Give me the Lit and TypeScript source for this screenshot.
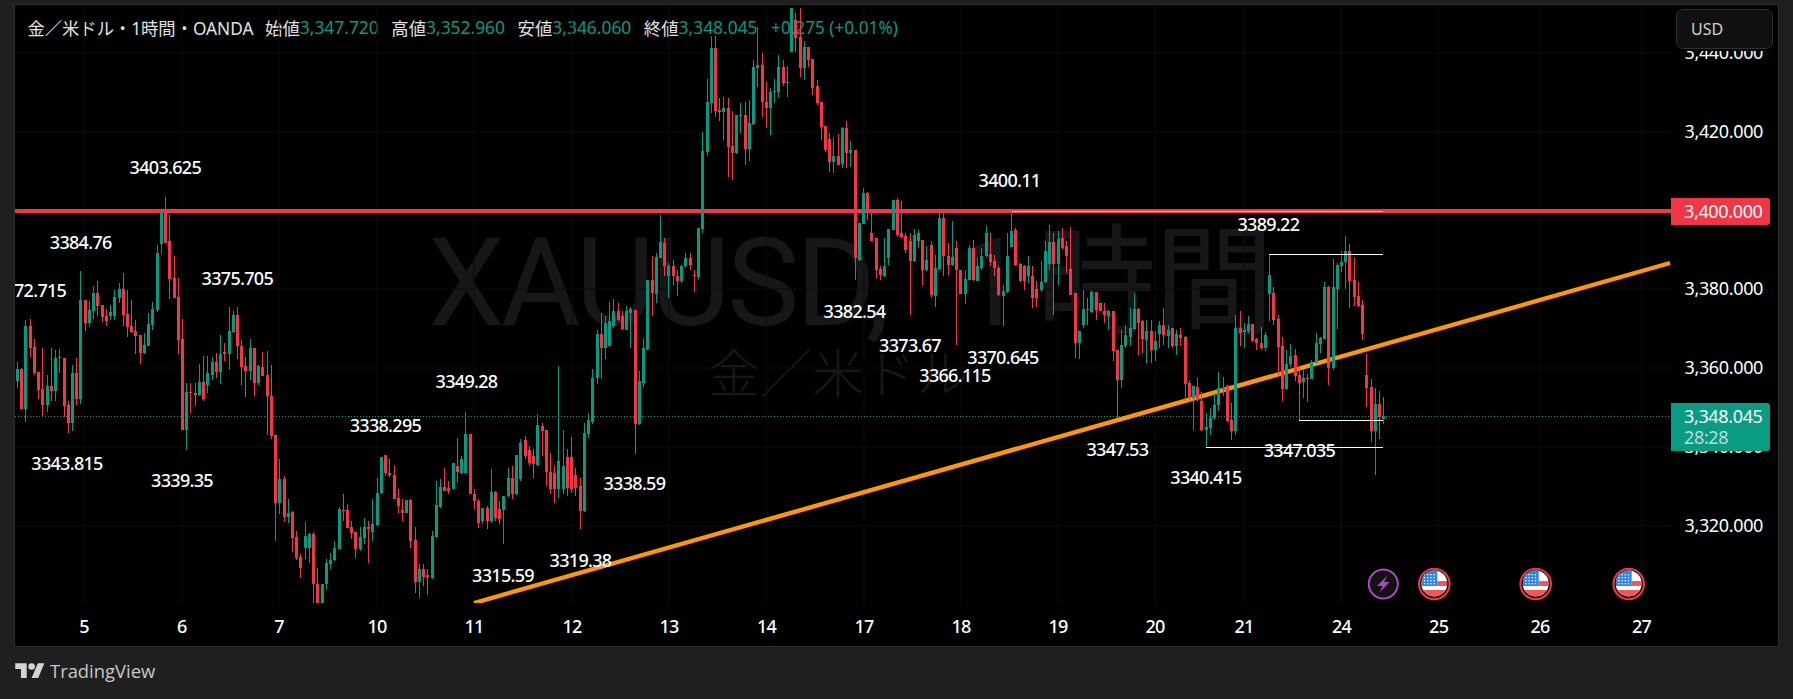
import { LitElement, html, svg, css } from "lit";
import { customElement } from "lit/decorators.js";

const OX = 15, OY = 5;
const PLOT_R = 1671, PLOT_B = 603;
const STEP = 4.23, LAST_X = 1383.33;

type Group = { cx: number; cy: number; sx: number; sy: number; rows: string };
const groups: Group[] = [
  { cx: 0, cy: 233, sx: 2.613, sy: 3, rows: `
46 G 408 445 388 465
56 R 407 527 405 527
67 G 279 527 262 567
79 R 279 345 258 372
90 R 342 420 318 425
101 R 418 470 418 497
111 R 468 515 345 548
122 G 460 515 427 537
134 R 460 474 345 505
145 G 375 474 352 505
156 G 372 376 348 420
166 R 375 518 375 552
179 R 516 570 505 600
189 G 420 570 397 595
200 R 420 498 375 515
210 G 200 497 114 512
222 R 200 270 200 293
233 G 232 270 205 282
244 G 180 233 160 257
254 R 180 218 145 250
265 R 216 252 216 268
277 R 250 264 228 280
288 G 237 250 215 262
299 G 192 248 170 260
310 G 168 195 150 210
322 R 168 245 120 280
333 R 243 282 170 312
344 R 280 297 200 300
354 R 295 308 262 362
366 R 306 360 306 392
377 G 337 360 300 362
388 G 273 338 240 340
398 G 228 277 207 292
409 G 60 232 35 238
420 G -67 33 -67 62
432 R -59 30 -109 30
443 R 25 138 -55 197
454 R 135 195 70 195
466 R 192 320 135 362
477 R 318 590 257 590
488 G 477 590 450 650
498 R 478 481 450 540
511 R 481 485 450 520
521 G 447 487 392 490
532 R 447 497 368 503
542 G 420 455 368 480
553 G 387 425 372 440
565 R 387 417 360 435
576 G 363 417 305 452
587 R 358 362 330 385
597 G 294 362 222 410
609 G 246 298 233 300
620 R 246 338 222 378
631 R 338 402 320 455
642 R 400 415 372 493
654 G 345 413 318 440
665 R 345 450 345 490
676 G 400 450 395 455
686 R 402 430 358 430
697 R 427 490 355 605
709 R 490 610 396 617` },
  { cx: 0, cy: 466, sx: 2.613, sy: 3, rows: `
720 R -93 110 -93 224
730 G 40 110 -20 145
741 R 40 152 30 168
753 G 140 152 100 170
764 R 137 215 135 258
775 R 213 275 195 283
786 R 272 305 265 335
797 G 210 245 168 278
808 G 205 245 200 290
819 R 203 355 198 412
829 R 355 412 305 412
840 G 355 412 355 412
852 G 292 355 280 368
863 G 282 295 262 308
874 G 247 282 225 285
885 G 128 248 122 250
897 R 132 134 85 165
908 R 133 185 115 187
919 R 183 200 165 220
930 R 198 248 198 275
941 G 213 250 183 255
952 G 183 215 155 235
963 R 183 190 165 290
974 G 175 197 100 225
985 G 82 178 35 180
997 G -27 82 -27 85
1007 R -32 22 -32 30
1018 R 20 28 -20 32
1029 R 28 98 0 100
1041 R 97 120 70 140
1052 R 132 140 100 165
1062 G 102 140 102 140
1073 R 102 225 100 245
1085 R 222 348 183 382
1096 G 310 348 295 395
1107 R 310 332 295 360
1118 R 328 332 310 387
1128 G 210 335 195 338
1140 G 118 212 45 215
1151 G 62 122 40 125
1163 R 63 75 5 75
1174 R 65 75 45 85
1186 G -9 68 -9 68
1195 R 0 18 -84 50
1205 G -21 20 -30 25
1216 G -96 20 -162 22
1228 R -97 83 -97 85
1240 R 83 105 70 130
1251 R 105 172 100 185
1262 G 125 165 125 175
1272 R 125 165 120 190
1284 G 78 165 10 172
1295 R 78 155 75 165
1306 R 130 158 105 175
1316 G 90 132 90 235
1328 G 35 90 5 92
1338 R 35 85 0 100
1350 G -34 85 -34 88
1361 G -69 40 -80 45
1372 R -77 -30 -90 -20
1383 R -49 -10 -60 0
1395 R -30 -5 -50 35
1405 G -123 -4 -156 0
1416 R -119 -104 -130 -30
1427 R -107 18 -107 60
1438 R 18 68 -40 85
1449 R 20 68 0 110
1460 G -14 70 -299 95
1470 G 0 68 -109 85
1481 R -27 65 -50 90
1491 R -27 70 -87 80
1502 R 28 65 5 90
1516 R 60 135 35 190
1527 G -99 135 -130 138
1538 G -139 -97 -160 -85
1548 G -264 -133 -290 -125
1558 G -396 -264 -409 -245` },
  { cx: 600, cy: 233, sx: 2.613, sy: 3, rows: `
3 R 303 345 240 437
13 G 270 345 250 378
24 G 265 338 207 340
35 G 233 280 198 285
46 R 235 260 210 265
58 R 248 288 235 290
68 G 235 290 220 292
80 G 228 240 222 345
91 R 230 572 230 662
102 G 443 572 415 575
113 G 345 450 315 462
124 G 140 347 140 350
135 R 140 180 70 250
146 G 72 182 60 210
157 G 28 75 -54 75
168 R 30 100 15 130
179 G 100 130 90 195
190 R 100 128 80 155
201 R 128 145 110 190
212 G 100 145 95 150
222 G 75 100 60 105
235 R 75 95 60 110
246 R 125 130 110 178
257 G -16 132 -16 140
710 R 0 25 -59 25
723 R 15 110 15 135
733 R 108 125 100 140
745 G 100 130 15 132
755 G -12 75 -12 95
787 R 0 12 -95 15
798 R 10 52 0 60
811 R 25 85 0 245
821 G 5 85 -13 88
832 G 0 25 -10 45
843 R 20 110 20 155
853 G 80 110 40 115
865 R 35 185 25 195
876 G 105 188 65 222
886 G -46 108 -65 110
897 R -45 70 -60 130
911 R 70 95 30 125
921 G 72 95 -35 100
932 R 45 112 25 335
942 R 112 183 112 183
954 G 138 183 110 212
965 G 45 140 35 142
975 R 45 140 20 145
986 G 100 143 75 145
997 G 70 105 45 110
1008 G 0 70 -21 72
1020 R 62 88 0 100
1031 R 83 105 65 130
1042 R 105 185 100 190
1054 G 175 188 155 280
1065 G 70 178 0 180
1075 G -6 42 -66 42
1086 R -9 95 -14 100
1098 R 93 145 90 148
1109 R 100 145 95 172
1120 G 100 128 70 150
1131 R 130 195 100 225
1142 R 168 195 145 222
1154 G 148 172 85 178
1164 G 55 148 25 150
1175 G 27 92 -25 110
1186 R 27 92 0 245
1198 G 18 92 -5 155
1208 R 15 45 -15 52
1219 R 40 70 25 120
1230 R 108 185 -17 187
1243 R 180 330 180 375
1253 G 295 330 295 378
1263 G 228 277 172 285
1274 R 228 232 195 275
1285 G 178 237 175 240
1297 R 178 232 178 262
1307 R 210 235 210 235
1318 R 235 247 210 270
1329 G 233 250 230 290
1342 R 233 355 233 385
1352 R 352 440 352 555
1362 G 335 440 290 465
1373 G 305 338 275 345
1385 G 285 312 225 340
1396 G 228 287 180 290
1407 R 228 270 225 365
1418 R 265 318 260 360
1430 G 295 320 262 390
1440 R 295 352 260 390
1450 G 325 352 295 385
1461 G 277 302 265 345
1472 R 275 305 225 335
1482 G 290 308 275 345
1492 R 285 340 285 345
1505 G 303 340 290 365
1516 R 305 315 285 340
1529 R 312 452 310 505
1540 R 450 495 440 505
1550 G 458 495 458 590
1562 R 435 480 435 500` },
  { cx: 600, cy: 0, sx: 2.613, sy: 3, rows: `
268 G 453 687 397 699
278 G 305 457 237 468
290 G 143 310 108 338
301 R 143 333 108 352
312 R 330 335 295 362
323 G 323 335 292 420
335 R 323 440 295 532
346 R 437 460 332 540
357 G 345 460 345 462
367 G 344 347 310 398
380 R 345 447 305 495
390 G 370 447 300 483
401 G 200 372 180 375
411 G 195 203 80 260
422 R 195 305 160 350
435 R 305 323 245 385
445 G 277 323 265 405
456 G 272 275 237 310
466 G 200 275 165 295
479 R 200 250 180 258
490 G 246 250 197 290
501 G 25 155 25 155
511 R 60 113 40 155
523 R 110 203 25 230
534 G 140 203 122 240
545 R 140 180 140 200
555 R 178 263 178 285
566 R 258 310 240 315
578 R 305 380 305 420
589 R 378 450 378 457
600 R 417 485 398 517
611 G 468 485 415 518
622 R 468 495 402 495
634 G 383 492 380 505
644 R 385 458 363 503
655 G 450 458 422 500
667 R 450 774 450 839
678 G 670 779 670 784
689 G 580 672 565 672
700 R 580 640 575 660
767 G 600 690 600 690
778 R 600 705 595 710` },
  { cx: 1193, cy: 233, sx: 2.613, sy: 3, rows: `
12 R 462 500 435 503
23 R 505 590 478 595
35 G 582 590 540 640
46 G 555 585 525 605
55 G 515 555 480 562
67 G 465 515 418 535
79 G 465 470 432 490
90 R 460 565 455 568
101 R 560 595 510 622
111 G 285 595 245 607
123 R 285 300 235 340
134 G 290 297 270 345
145 G 273 293 250 300
156 R 272 325 272 328
167 R 318 330 315 350` },
  { cx: 1260, cy: 230, sx: 3, sy: 3, rows: `
3 R 340 353 292 360
16 G 315 353 305 362
28 G 135 192 73 272
40 R 190 270 170 285
55 R 267 350 255 435
67 R 348 477 322 513
79 G 402 478 360 480
91 G 378 403 342 410
106 R 375 438 357 453
118 R 435 460 408 570
130 G 445 457 418 503
142 R 444 447 432 515
157 G 397 447 390 447
169 G 340 400 310 400
181 G 323 342 320 368
193 G 170 327 155 327
205 R 170 414 168 465
220 G 170 414 87 420
232 G 105 177 98 298
244 G 96 108 63 125
256 G 63 95 18 177
271 R 63 152 42 233
283 R 150 200 83 228
295 R 198 227 155 230
307 R 225 312 210 330
322 R 435 473 372 530
334 R 471 602 447 635
346 G 522 602 473 735
358 R 522 562 483 627
370 G 558 567 501 582` },
];

type Candle = { x: number; up: boolean; t: number; b: number; wt: number; wb: number };
function buildCandles(): Candle[] {
  const map = new Map<number, Candle>();
  for (const g of groups) {
    for (const line of g.rows.trim().split("\n")) {
      const [zx, c, t, b, wt, wb] = line.trim().split(" ");
      const rx = g.cx + Number(zx) / g.sx;
      const i = Math.round((rx - LAST_X) / STEP);
      const y = (v: string) => Math.round(g.cy + Number(v) / g.sy);
      map.set(i, {
        x: Math.round(LAST_X + i * STEP),
        up: c === "G",
        t: y(t),
        b: Math.max(y(b), y(t) + 1),
        wt: y(wt),
        wb: y(wb),
      });
    }
  }
  return [...map.values()];
}
const candles = buildCandles();

const days: [string, number][] = [
  ["5", 84], ["6", 181.8], ["7", 279], ["10", 377], ["11", 474], ["12", 572], ["13", 669], ["14", 766.5],
  ["17", 864], ["18", 961], ["19", 1058], ["20", 1155], ["21", 1244], ["24", 1341.5], ["25", 1438.7], ["26", 1540], ["27", 1641.5],
];
const gridX = [84, 181.8, 279, 377, 474, 572, 669, 766.5, 864, 961, 1058, 1155, 1244.5, 1341.5, 1438.7, 1540, 1641.5];
const prices: [string, number][] = [
  ["3,440.000", 52], ["3,420.000", 131], ["3,380.000", 288], ["3,360.000", 367], ["3,340.000", 446], ["3,320.000", 525],
];
const notes: [string, number, number][] = [
  ["3403.625", 165.3, 166.7], ["3384.76", 80.7, 242.3], ["3375.705", 237.3, 278],
  ["3349.28", 466.5, 380.7], ["3338.295", 385.4, 425], ["3343.815", 67, 463], ["3339.35", 182, 480],
  ["3315.59", 503, 574.7], ["3319.38", 580.5, 560], ["3338.59", 634.4, 482.7], ["3382.54", 854.5, 310.7],
  ["3373.67", 910, 344.7], ["3370.645", 1003, 357], ["3366.115", 955, 375], ["3347.53", 1117.4, 449],
  ["3400.11", 1009.5, 180], ["3389.22", 1268.4, 224], ["3340.415", 1206, 476.7], ["3347.035", 1299.4, 449.7],
];
const legend: [string, string][] = [
  ["始値", "3,347.720"], ["高値", "3,352.960"], ["安値", "3,346.060"], ["終値", "3,348.045"],
];

const pos = (x: number, y: number) => `left:${x - OX}px;top:${y - OY}px`;

const flag = (cx: number, id: string) => {
  const stars = [];
  for (let r = 0; r < 4; r++) for (let c = 0; c < 4; c++) stars.push(svg`<rect class="star" x=${-10.5 + c * 3.2} y=${-10 + r * 3} width="1.3" height="1.3"></rect>`);
  return svg`<g transform="translate(${cx} 584)">
    <clipPath id=${id}><circle r="13" cy="-0.6"></circle></clipPath>
    <circle class="ring" r="15.3"></circle>
    <g clip-path="url(#${id})">
      <rect class="white" x="-13" y="-14" width="26" height="28"></rect>
      <rect class="stripe" x="3" y="-3" width="10" height="5"></rect>
      <rect class="stripe" x="-13" y="6" width="26" height="7"></rect>
      <rect class="canton" x="-13" y="-14" width="16" height="16"></rect>
      ${stars}
    </g>
  </g>`;
};

@customElement("app-root")
export class AppRoot extends LitElement {
  static styles = css`
    :host { display: flex; flex-direction: column; width: 1793px; height: 699px; background: #1f1f1f; overflow: hidden;
      font-family: "Noto Sans", "Noto Sans CJK JP", sans-serif; }
    .pane { position: relative; box-sizing: border-box; margin: 4px 14px 0; height: 643px; border: 1px solid #2e2e2e; background: #000; overflow: hidden; }
    .mark { position: absolute; white-space: nowrap; color: #17171a; line-height: 1; }
    .mark1 { left: 413px; top: 208px; font-size: 122px; letter-spacing: -3.6px; word-spacing: 44px; font-family: Roboto, "Noto Sans CJK JP", sans-serif; }
    .mark1 span { margin-left: 14px; font-size: 120px; font-family: "Noto Sans CJK JP", sans-serif; font-weight: 400; letter-spacing: -2px; }
    .mark2 { left: 693px; top: 340px; font-size: 52px; font-family: "Noto Sans CJK JP", sans-serif; font-weight: 300; }
    .legend { display: flex; align-items: center; height: 44px; padding-left: 12.5px; font-size: 17.4px; color: #e0e0e0; white-space: nowrap; }
    .title { font-size: 17.3px; width: 237.5px; }
    .pair { margin-right: 12.5px; display: flex; }
    .num { color: #089981; font-size: 17.4px; }
    .chg { color: #089981; font-size: 17.2px; margin-left: 1px; }
    .chart { position: absolute; left: 0; top: 0; width: 1763px; height: 641px; }
    .up { fill: #089981; }
    .dn { fill: #f23645; }
    .grid { stroke: #0c0c0c; stroke-width: 1; }
    .ring { fill: #1a1a1a; stroke: #f23645; stroke-width: 2; }
    .white { fill: #fff; }
    .stripe { fill: #f0565a; }
    .canton { fill: #2e86e8; }
    .star { fill: #fff; }
    .bolt-ring { fill: #111; stroke: #ab47bc; stroke-width: 2; }
    .bolt { fill: #ab47bc; }
    .note, .tick, .price { position: absolute; color: #fff; white-space: nowrap; font-size: 18px; letter-spacing: -0.7px; line-height: 20px; font-weight: 500; transform: translate(-50%, -50%); }
    .price { transform: translateY(-50%); font-weight: 400; letter-spacing: -0.35px; }
    .tag { position: absolute; box-sizing: border-box; width: 99px; border-radius: 0 3px 3px 0; color: #fff; font-size: 18px; letter-spacing: -0.35px; line-height: 20px; padding-left: 13px; }
    .tag.red { background: #f23645; height: 27px; padding-top: 3px; }
    .tag.green { background: #0a9c82; height: 48px; padding-top: 3px; }
    .timer { color: #b8dfd7; margin-top: 1px; }
    .usd { position: absolute; left: 1661px; top: 4px; box-sizing: border-box; width: 97px; height: 40px; border: 1px solid #2e2e2e; border-radius: 7px; background: #101010; box-shadow: 0 0 0 2px #000; color: #d1d1d1; font-size: 16px; line-height: 38px; padding-left: 14px; }
    .note.clip { transform: translateY(-50%); }
    .footer { display: flex; align-items: center; gap: 5px; padding: 11px 0 0 15px; color: #c9c9c9; font-size: 18.4px; font-family: "Open Sans", sans-serif; line-height: 26px; }
    .footer svg { display: block; fill: #d4d4d4; }
  `;

  render() {
    return html`
      <div class="pane">
        <div class="mark mark1">XAUUSD, 1<span>時間</span></div>
        <div class="mark mark2">金／米ドル</div>
        <div class="legend">
          <span class="title">金／米ドル・1時間・OANDA</span>
          ${legend.map(([k, v]) => html`<span class="pair"><span>${k}</span><span class="num">${v}</span></span>`)}
          <span class="chg">+0.275 (+0.01%)</span>
        </div>
        <svg class="chart" viewBox="${OX} ${OY} 1763 641">
          <defs><clipPath id="plot"><rect x=${OX} y=${OY} width=${PLOT_R - OX} height=${PLOT_B - OY}></rect></clipPath></defs>
          <g clip-path="url(#plot)">
            ${gridX.map((x) => svg`<line class="grid" x1=${x} x2=${x} y1=${OY} y2=${PLOT_B}></line>`)}
            ${[53, 132, 211, 289, 368, 447, 526].map((y) => svg`<line class="grid" x1=${OX} x2=${PLOT_R} y1=${y} y2=${y}></line>`)}
            <rect class="dn" x=${OX} y="209" width=${PLOT_R - OX} height="4"></rect>
            <line x1=${OX} x2="1671" y1="416.5" y2="416.5" stroke="#089981" stroke-width="1" stroke-dasharray="1 2"></line>
            <line x1="474" y1="603" x2="1670" y2="263" stroke="#ff9800" stroke-width="4.4"></line>
            <g shape-rendering="crispEdges">
              ${candles.map((c) => svg`
                <rect class=${c.up ? "up" : "dn"} x=${c.x} y=${c.wt} width="1" height=${c.wb - c.wt}></rect>
                <rect class=${c.up ? "up" : "dn"} x=${c.x - 1} y=${c.t} width="3" height=${c.b - c.t}></rect>`)}
              <rect class="white" x="1012" y="211" width="371" height="1"></rect>
              <rect class="white" x="1269" y="254" width="114" height="1"></rect>
              <rect class="white" x="1299" y="420" width="84" height="1"></rect>
              <rect class="white" x="1206" y="447" width="177" height="1"></rect>
            </g>
            <g transform="translate(1383.3 584)">
              <circle class="bolt-ring" r="14.5"></circle>
              <path class="bolt" d="M4.2-8.6-6.4 2H-.8L-3.6 8.6 6.2-2H.8Z"></path>
            </g>
            ${flag(1434.3, "f1")}
            ${flag(1535.7, "f2")}
            ${flag(1628.7, "f3")}
          </g>
        </svg>
        ${notes.map(([t, x, y]) => html`<div class="note" style=${pos(x, y)}>${t}</div>`)}
        <div class="note clip" style=${pos(14, 289.7)}>72.715</div>
        ${days.map(([t, x]) => html`<div class="tick" style=${pos(x, 626)}>${t}</div>`)}
        ${prices.map(([t, y]) => html`<div class="price" style=${pos(1684.5, y)}>${t}</div>`)}
        <div class="tag red" style=${pos(1671, 198)}>3,400.000</div>
        <div class="tag green" style=${pos(1671, 403)}>3,348.045<div class="timer">28:28</div></div>
        <div class="usd">USD</div>
      </div>
      <div class="footer">
        <svg width="30" height="23" viewBox="0 0 36 28"><path d="M14 22H7V11H0V4h14v18zM28 22h-8l7.5-18h8L28 22z"></path><circle cx="20" cy="8" r="4"></circle></svg>
        <span>TradingView</span>
      </div>
    `;
  }
}
